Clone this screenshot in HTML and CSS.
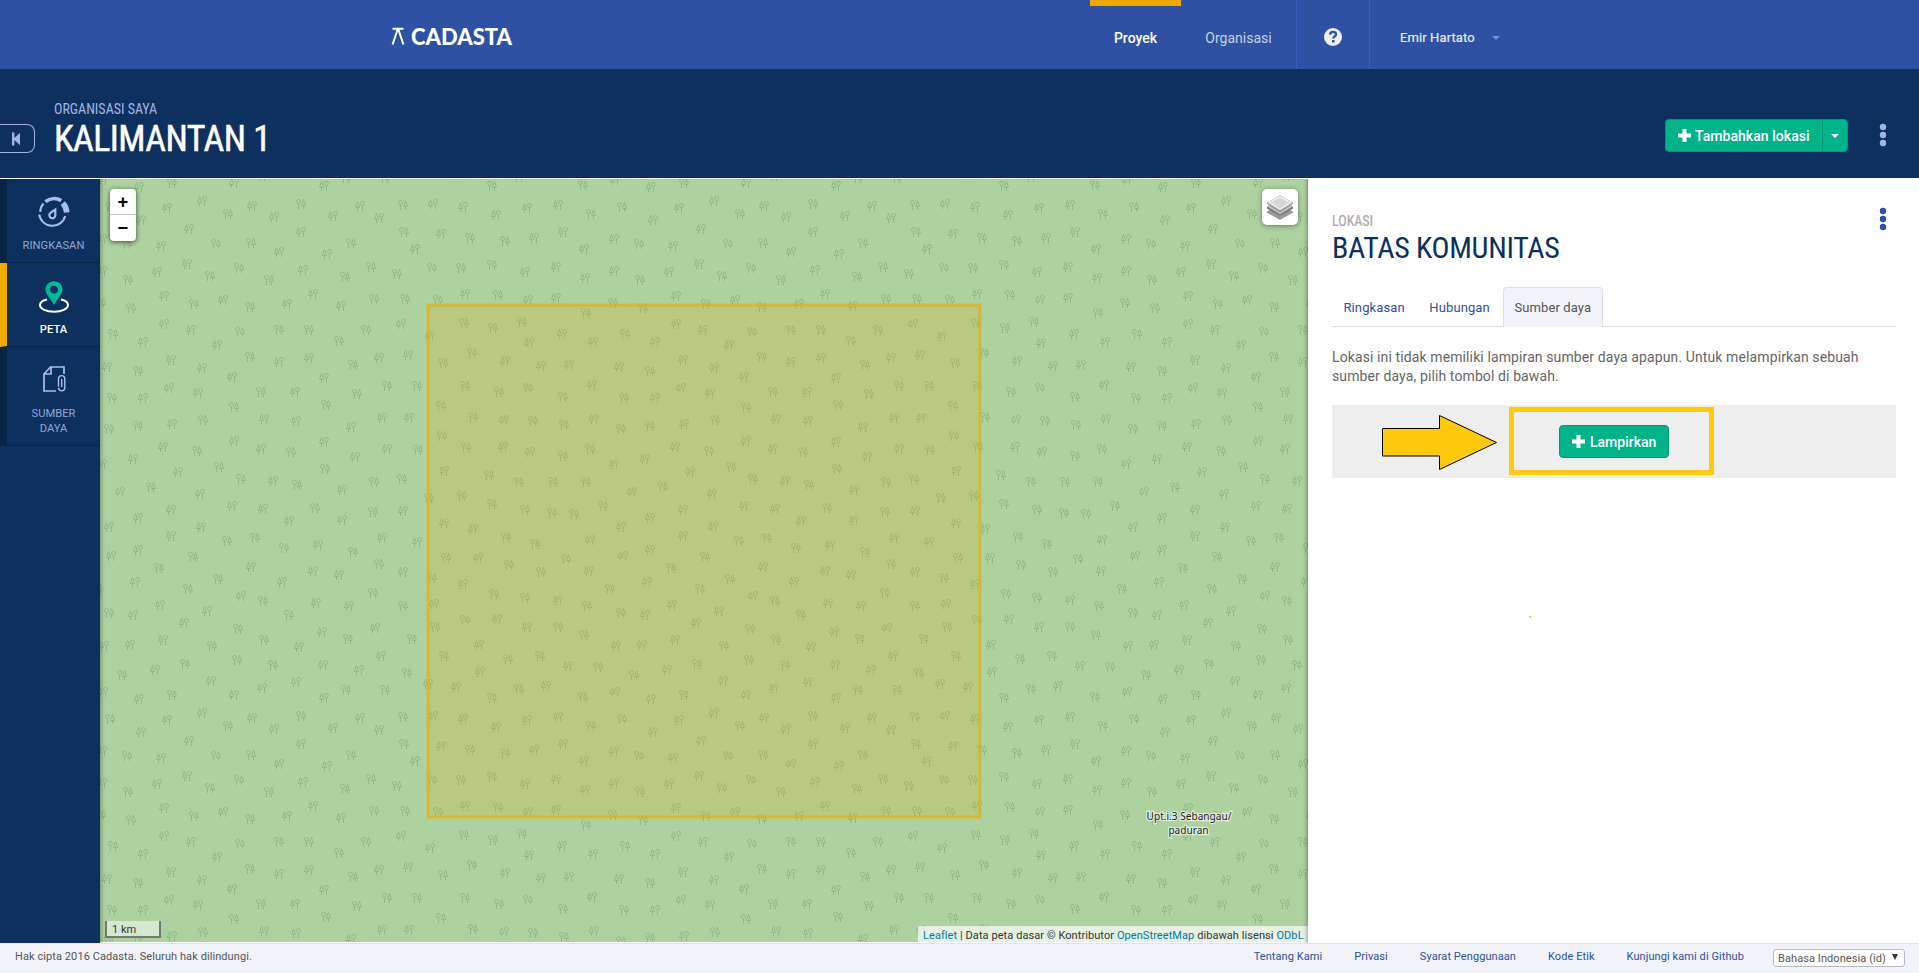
FILE: index.html
```html
<!DOCTYPE html>
<html lang="id">
<head>
<meta charset="utf-8">
<title>Kalimantan 1 | Cadasta</title>
<link rel="stylesheet" href="styles.css">
</head>
<body>
<header class="topbar">
  <svg class="logo" width="136" height="34" viewBox="0 -4 136 34">
    <path d="M1.500 1.800h11M6.600 2.500 1.600 17.500M7.400 2.500l5 15" fill="none" stroke="#fff" stroke-width="2"/>
    <text class="logo-text" x="20" y="17.500" textLength="101" lengthAdjust="spacingAndGlyphs">CADASTA</text>
  </svg>
  <nav class="topnav">
    <a class="topnav-link topnav-active">Proyek</a>
    <a class="topnav-link topnav-org">Organisasi</a>
    <a class="help"><svg width="18" height="18" viewBox="0 0 18 18"><circle cx="9" cy="9" r="9" fill="#eee"/><path d="M6 6.600C6.200 4.600 7.400 3.900 9 3.900c1.700 0 3 .9 3 2.500 0 2-2.700 2-2.700 4.200" fill="none" stroke="#2e51a3" stroke-width="2.300"/><path d="M8 12h2.600v2.500H8z" fill="#2e51a3"/></svg></a>
    <a class="user"><span class="user-name">Emir Hartato</span><i class="caret user-caret"></i></a>
  </nav>
</header>
<section class="project">
  <a class="collapse"><svg width="8" height="14" viewBox="0 0 8 14"><path d="M0 .5h2.400v5.400L8 .8v12.400L2.400 8.100v5.400H0z" fill="#a3b5e3"/></svg></a>
  <div class="project-title">
    <div class="org cond">ORGANISASI SAYA</div>
    <h1 class="name cond">KALIMANTAN 1</h1>
  </div>
  <div class="add">
    <a class="add-main"><svg class="plus" width="13" height="13" viewBox="0 0 13 13"><path d="M4.500 0h4v4.500H13v4H8.500V13h-4V8.500H0v-4h4.500z" fill="#fff"/></svg><span class="add-text">Tambahkan lokasi</span></a>
    <a class="add-drop"><i class="caret"></i></a>
  </div>
  <svg class="dots" width="8" height="24" viewBox="0 0 8 24" fill="#a3b5e3"><circle cx="4" cy="4" r="3.200"/><circle cx="4" cy="12" r="3.200"/><circle cx="4" cy="20" r="3.200"/></svg>
</section>
<main class="main">
  <aside class="sidebar">
    <a class="side-item">
      <svg class="side-icon" width="34" height="34" viewBox="0 0 34 34" fill="none" stroke="#a9bfe8">
        <path d="M3.200 16a13 13 0 0 1 3.300-8.500M2.200 18.500a13.300 13.300 0 0 0 26 1.500" stroke-width="2"/>
        <path d="M8.500 5.600A14 14 0 0 1 24.200 4.600" stroke-width="3.600"/>
        <path d="M25.800 7.200A15 15 0 0 1 29.800 16.500" stroke-width="5.600"/>
        <path d="M18.300 13.500v6a3 3 0 1 1-4.600-2.800z" stroke-width="2.200"/>
      </svg>
      <span>RINGKASAN</span>
    </a>
    <a class="side-item side-active">
      <svg class="side-icon" width="34" height="34" viewBox="0 0 34 34">
        <path d="M10 19.500C5.500 20.500 3 22.500 3 25c0 4 6.500 6.800 14 6.800S31 29 31 25c0-2.500-2.500-4.500-7-5.500" fill="none" stroke="#fff" stroke-width="2"/>
        <path fill-rule="evenodd" d="M17 1.200c5 0 8.500 3.700 8.500 8.300 0 5-5.500 9.500-8.500 15.500-3-6-8.500-10.500-8.500-15.500C8.500 4.900 12 1.200 17 1.200zm0 4.500a3.900 3.900 0 1 0 0 7.800 3.900 3.900 0 0 0 0-7.800z" fill="#00b995"/>
      </svg>
      <span>PETA</span>
    </a>
    <a class="side-item side-last">
      <svg class="side-icon" width="34" height="34" viewBox="0 0 34 34" fill="none" stroke="#a9bfe8" stroke-width="1.700">
        <path d="M19 27H7V10L13.500 3H27v7M14 3.500V10H7.500"/>
        <path d="M21.500 22.500v-8.200a3.200 3.200 0 0 1 6.300 0v9.500a3 3 0 0 1-6.200 0" stroke-width="1.400"/><path d="M24.700 15v8" stroke-width="1.400"/>
      </svg>
      <span>SUMBER<br>DAYA</span>
    </a>
  </aside>
  <div class="map">
    <svg class="tiles" width="1208" height="763">
      <defs><pattern id="forest" width="512" height="512" y="-4" patternUnits="userSpaceOnUse"></pattern></defs>
      <rect width="1208" height="763" fill="#aed1a0"/>
      <rect width="1208" height="763" fill="url(#forest)"/>
      <rect x="328" y="126" width="552" height="512" fill="#edaa00" fill-opacity=".2" stroke="#edaa00" stroke-opacity=".6" stroke-width="3"/>
      <g class="place"><text x="1089" y="641">Upt.i.3 Sebangau/</text><text x="1088.500" y="655">paduran</text></g>
    </svg>
    <div class="zoomer"><a class="zoom-in">+</a><a>−</a></div>
    <div class="layers"><svg width="28" height="28" viewBox="0 0 28 28"><path d="M1 18.500 14 11l13 7.500v1L14 27 1 19.500z" fill="#999"/><path d="M1 14 14 7l13 7v1.500L14 23 1 15.500z" fill="#777"/><path d="M1 13.500 14 6l13 7.500-13 8z" fill="#bbb"/><path d="M1 9.500 14 2l13 7.500v1L14 19 1 10.500z" fill="#888"/><path d="M1 9.500 14 2l13 7.500-13 8z" fill="#e6e6e6"/><path d="M6 9.500 14 5l8 4.500-8 6z" fill="#d5d5d5"/></svg></div>
    <div class="scale">1 km</div>
    <div class="credit"><a>Leaflet</a> | Data peta dasar © Kontributor <a>OpenStreetMap</a> dibawah lisensi <a>ODbL</a></div>
  </div>
  <section class="panel">
    <div class="panel-head">
      <div><div class="kind cond">LOKASI</div><h2 class="place-name cond">BATAS KOMUNITAS</h2></div>
      <svg class="panel-dots" width="8" height="24" viewBox="0 0 8 24" fill="#2e51a3"><circle cx="4" cy="4" r="3.200"/><circle cx="4" cy="12" r="3.200"/><circle cx="4" cy="20" r="3.200"/></svg>
    </div>
    <div class="tabs"><a class="tab">Ringkasan</a><a class="tab">Hubungan</a><a class="tab tab-active">Sumber daya</a></div>
    <p class="note">Lokasi ini tidak memiliki lampiran sumber daya apapun. Untuk melampirkan sebuah<br>sumber daya, pilih tombol di bawah.</p>
    <div class="attach">
      <a class="attach-btn"><svg class="plus" width="13" height="13" viewBox="0 0 13 13"><path d="M4.500 0h4v4.500H13v4H8.500V13h-4V8.500H0v-4h4.500z" fill="#fff"/></svg><span class="attach-text">Lampirkan</span></a>
      <svg class="arrow" width="118" height="58" viewBox="0 0 118 58"><path d="M1.500 14.500h57V1.500L115.500 28.500 58.500 55.500V42h-57z" fill="#ffc90e" stroke="#000"/></svg>
      <i class="frame"></i>
      <i class="speck"></i>
    </div>
  </section>
</main>
<footer class="footer">
  <span class="copy">Hak cipta 2016 Cadasta. Seluruh hak dilindungi.</span>
  <nav class="links"><a>Tentang Kami</a><a>Privasi</a><a>Syarat Penggunaan</a><a>Kode Etik</a><a>Kunjungi kami di Github</a></nav>
  <div class="lang"><span>Bahasa Indonesia (id)</span><i class="lang-arrow"></i></div>
</footer>
<script src="forest.js"></script>
</body>
</html>
```
FILE: styles.css
```css
* { box-sizing: border-box; }
body { margin: 0; width: 1919px; height: 973px; overflow: hidden; display: flex; flex-direction: column; font-family: Roboto, sans-serif; font-size: 13px; color: #555; background: #fff; }
h1, h2, p { margin: 0; font-weight: 400; }
.cond { font-family: "Roboto Condensed", Roboto, sans-serif; white-space: nowrap; }

.topbar { height: 69px; flex: none; background: #2e51a3; display: flex; justify-content: space-between; padding: 0 419px 0 391px; }
.logo { margin-top: 23px; }
.logo-text { font: 900 22.500px Lato, sans-serif; fill: #fff; }
.topnav { display: flex; }
.topnav-link { font-size: 14px; line-height: 76px; color: #c8d0e2; text-align: center; }
.topnav-active { width: 91px; color: #fff; font-weight: 500; line-height: 64px; border-top: 6px solid #edaa00; }
.topnav-org { width: 115px; }
.help { width: 73px; border-left: 1px solid #3a5fbe; display: flex; justify-content: center; align-items: flex-start; padding-top: 28px; }
.user { border-left: 1px solid #3a5fbe; width: 131px; display: flex; align-items: center; padding: 6px 0 0 30px; color: #e6eaf3; }
.user-name { width: 92px; letter-spacing: .1px; -webkit-text-stroke: .2px; }
.caret { border: 4px solid transparent; border-top-color: #fff; border-bottom: 0; }
.user-caret { border-top-color: #6f8fdc; }

.project { height: 109px; flex: none; background: #0e305e; display: flex; align-items: flex-start; }
.collapse { width: 35px; height: 29px; margin-top: 55px; border: 1px solid #a3b5e3; border-left: 0; border-radius: 0 8px 8px 0; display: flex; align-items: center; padding-left: 12px; }
.project-title { margin-left: 19px; padding-top: 32px; flex: 1; }
.org { font-size: 14px; line-height: 16px; color: #a3b5e3; }
.name { font-size: 36px; line-height: 44px; color: #fff; letter-spacing: -.55px; -webkit-text-stroke: .5px #fff; }
.add { display: flex; height: 33px; margin-top: 50px; width: 183px; background: #00b388; border: 1px solid #009a75; border-radius: 4px; color: #fff; }
.add-main { width: 157px; border-right: 1px solid #009a75; display: flex; align-items: center; padding-left: 12px; gap: 4px; white-space: nowrap; }
.add-text, .attach-text { font-size: 14px; font-weight: 500; }
.add-text { letter-spacing: .05px; }
.add-drop { flex: 1; display: flex; align-items: center; justify-content: center; }
.dots { margin: 54px 32px 0 31px; }

.main { height: 764px; flex: none; margin-top: 1px; display: flex; }
.sidebar { width: 100px; background: #0e305e; }
.side-item { display: flex; flex-direction: column; align-items: center; height: 84px; border-left: 7px solid #0a2445; border-bottom: 1px solid #0a2445; font-size: 11.200px; line-height: 15px; text-align: center; color: #91a6d6; padding: 17px 0 0; }
.side-icon { margin-bottom: 8px; }
.side-active { border-left-color: #edaa00; color: #fff; font-weight: 500; }
.side-last { height: 99px; }
.map { position: relative; width: 1208px; overflow: hidden; }
.map::after { content: ""; position: absolute; inset: 0; box-shadow: inset 5px 0 4px -4px rgba(0, 0, 0, .35), inset -5px 0 4px -4px rgba(0, 0, 0, .35); pointer-events: none; }
.tiles { display: block; }
.tree { fill: none; stroke: #8fb886; stroke-width: 1; }
.place { font: 10.100px "Noto Sans", sans-serif; text-anchor: middle; fill: #222; stroke: rgba(255, 255, 255, .6); stroke-width: 2.500px; paint-order: stroke; }
.zoomer { position: absolute; left: 10px; top: 10px; width: 26px; border-radius: 4px; background: #fff; box-shadow: 0 1px 5px rgba(0, 0, 0, .65); font: bold 18px/26px "Liberation Mono", monospace; color: #000; text-align: center; }
.zoomer a { display: block; height: 26px; }
.zoomer .zoom-in { line-height: 28px; height: 25px; }
.zoomer a + a { border-top: 1px solid #ccc; height: 27px; line-height: 28px; }
.layers { position: absolute; right: 10px; top: 10px; width: 36px; height: 36px; border-radius: 5px; background: #fff; box-shadow: 0 1px 5px rgba(0, 0, 0, .4); padding: 4px; }
.scale { position: absolute; left: 5px; bottom: 5px; width: 56px; height: 17px; border: 2px solid #777; border-top: 0; background: rgba(255, 255, 255, .5); font-size: 11px; line-height: 18px; padding-left: 5px; color: #333; }
.credit { position: absolute; right: 0; bottom: 0; height: 17px; width: 390px; background: rgba(255, 255, 255, .7); font-size: 11px; line-height: 19px; padding-left: 5px; color: #333; white-space: nowrap; letter-spacing: .075px; }
.credit a { color: #0078a8; }

.panel { flex: 1; padding: 34px 23px 0 24px; }
.panel-head { display: flex; justify-content: space-between; height: 74px; }
.kind { font-size: 14px; line-height: 16px; color: #aaa; -webkit-text-stroke: .2px; }
.place-name { font-size: 30px; line-height: 37px; color: #0e305e; letter-spacing: -.33px; }
.panel-dots { margin: -6px 9px 0 0; }
.tabs { display: flex; height: 40px; border-bottom: 1px solid #ddd; }
.tab { padding: 0 10.500px; line-height: 40px; height: 40px; color: #2e51a3; font-size: 13px; letter-spacing: .1px; margin-right: 1.700px; border: 1px solid transparent; border-bottom: 0; white-space: nowrap; }
.tab-active { color: #555; background: #f2f3f8; border-color: #dfe1e8; border-radius: 4px 4px 0 0; }
.note { font-size: 14px; line-height: 19px; margin-top: 21px; height: 57px; white-space: nowrap; color: #666; letter-spacing: .11px; }
.attach { position: relative; height: 73px; background: #eee; display: flex; justify-content: center; align-items: center; }
.attach-btn { width: 110px; height: 33px; background: #00b388; border: 1px solid #009a75; border-radius: 4px; color: #fff; display: flex; align-items: center; gap: 5px; padding-left: 12px; }
.arrow { position: absolute; left: 49px; top: 9px; }
.frame { position: absolute; left: 177px; top: 2px; width: 205px; height: 68px; border: 5px solid #ffc90e; }
.speck { position: absolute; left: 197px; top: 211px; width: 2px; height: 2px; background: #ffc90e; }

.footer { flex: 1; background: #f2f3f8; border-top: 1px solid #e2e3ea; display: flex; align-items: flex-start; font-size: 11px; line-height: 13px; padding: 5px 14px 0 15px; white-space: nowrap; letter-spacing: .08px; }
.copy { flex: 1; padding-top: 1px; }
.links { display: flex; gap: 32px; color: #2e51a3; padding-top: 1px; }
.lang { width: 132px; height: 18px; margin-left: 29px; background: #fff; border: 1px solid #bbb; border-radius: 3px; display: flex; align-items: center; justify-content: space-between; padding: 1px 6px 0 4px; }
.lang-arrow { border: 3.500px solid transparent; border-top: 6px solid #333; border-bottom: 0; margin-bottom: 3px; }
```
FILE: forest.js
```js
// Tree positions inside one 1536-unit (512px) woodland tile, as x,y pairs.
const TILE = 1536;
const pineLeft = `117,36 402,25 672,33 10,14 486,2 1068,-1 201,98 306,77 456,92 522,125 699,122 780,92 837,128 999,86 1089,95 1188,119 123,134
267,161 183,212 537,230 603,170 681,236 945,221 1023,176 6,191 261,266 171,290 609,284 6,287 192,362 369,374 561,386 639,356 723,392 1095,356
192,446 273,464 903,446 990,482 129,500 351,509 213,554 537,560 627,548 837,548 924,539 21,575 306,578 396,605 672,608
207,638 294,653 585,650 129,668 216,746 492,731 588,737 753,755 846,728 927,728 402,797 189,815 483,821 672,800 765,845 861,821 99,851 6,866
234,890 519,917 726,944 1032,887 60,950 300,956 396,992 489,1001 213,1004 114,1028 567,1037 726,1034 909,1007 27,1055 303,1055 1032,1043 1119,1061
213,1082 654,1109 846,1088 951,1100 33,1142 114,1124 1134,1148 453,1175 909,1190 639,1187 717,1199
105,1220 546,1220 423,1262 648,1283 747,1292 1089,1226 1002,1286 180,1289 321,1307 99,1319 252,1343 666,1370 825,1358 1191,1331 189,1394 12,1412 90,1409
597,1415 1137,1409 669,1469 843,1442 777,1484 165,1484 333,1517 588,1520 984,1526 1140,1490
1281,98 1374,89 1302,188 1389,170 1452,221 1275,290 1368,275 1455,308 1284,374 1368,368 1386,476 1287,503 1479,500 1215,557 1323,572 1407,569
1476,629 1212,734 1482,731 1209,815 1290,830 1470,1094 1467,1187 1374,1274 1281,1355 1404,1472 1338,1532`;
const pineRight = `216,25 1176,33 738,10 855,10 384,116 603,86 909,89 30,95 348,206 453,203 753,203 912,170 1110,188 81,206
84,314 330,302 417,278 507,314 735,305 813,275 891,296 996,278 1083,278 1176,269 282,386 450,395 822,371 915,371 1014,374 1194,359 93,398 3,383
420,470 537,464 627,464 798,464 717,497 1092,443 1179,458 39,476 450,545 759,569 1029,563 1116,533 114,587
483,650 771,656 861,632 951,632 1095,632 1197,650 36,668 402,695 678,689 1023,692 309,734 114,752 27,761 1119,725
291,827 573,830 954,824 1026,782 1098,815 357,875 423,911 591,929 675,881 822,920 906,911 1167,899 153,935 987,968 1086,962 1176,986
645,998 819,1010 381,1097 465,1088 552,1118 759,1130 279,1145 1038,1148 177,1180 837,1168 354,1211
264,1241 489,1277 819,1253 909,1292 996,1208 1182,1256 27,1313 567,1319 414,1361 1005,1355 1095,1334 336,1412 492,1394 744,1391 936,1391 1032,1442
255,1466 411,1454 519,1469 66,1499 921,1493 1257,5 1449,30 1473,116 1215,197 1458,413 1266,440 1284,638 1389,665 1299,737 1392,749 1389,842 1470,821
1257,920 1359,920 1458,920 1275,1004 1356,1013 1422,1016 1509,992 1218,1085 1305,1106 1398,1151 1227,1169 1323,1190 1275,1268 1461,1292 1530,1241
1374,1355 1452,1379 1224,1451 1320,1442 1494,1475`;

function tree(x, y, side) {
  const p = x + side * 2.5, r = x - side * 2.5;
  return `M${p} ${y - 4.5}L${p - 2} ${y + 1.5}h4zM${p} ${y + 2}v3M${r} ${y}v5M${r - 2} ${y - 2.5}a2 2 0 1 1 4 0a2 2 0 1 1-4 0`;
}
let d = '';
[[pineLeft, -1], [pineRight, 1]].forEach(([list, side]) => {
  list.split(/\s+/).forEach(pair => {
    const [x, y] = pair.split(',').map(Number);
    for (const dx of [-TILE, 0, TILE]) for (const dy of [-TILE, 0, TILE]) {
      const px = x + dx, py = y + dy;
      if (px > -20 && px < TILE + 20 && py > -20 && py < TILE + 20) d += tree(Math.round(px / 3), Math.round(py / 3), side);
    }
  });
});
const path = document.createElementNS('http://www.w3.org/2000/svg', 'path');
path.setAttribute('class', 'tree');
path.setAttribute('d', d);
document.getElementById('forest').append(path);
```
